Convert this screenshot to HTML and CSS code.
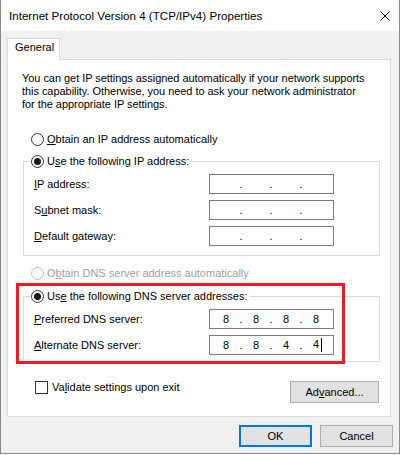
FILE: index.html
```html
<!DOCTYPE html>
<html lang="en">
<head>
  <meta charset="UTF-8" />
  <meta name="viewport" content="width=device-width, initial-scale=1.0" />
  <title>Internet Protocol Version 4 (TCP/IPv4) Properties</title>
  <link rel="stylesheet" href="styles.css">
</head>
<body>
  <div class="window">
    <div class="titlebar">
      <span class="title">Internet Protocol Version 4 (TCP/IPv4) Properties</span>
      <svg class="close" width="10" height="10" viewBox="0 0 10 10">
        <path d="M0.5 0.5 L9.5 9.5 M9.5 0.5 L0.5 9.5" stroke="#000" stroke-width="1" fill="none" />
      </svg>
    </div>

    <div class="content">
      <div class="tab">General</div>
      <div class="panel">
        <p class="intro">You can get IP settings assigned automatically if your network supports<br>this capability. Otherwise, you need to ask your network administrator<br>for the appropriate IP settings.</p>

        <div class="option first"><span class="radio"></span><span><u>O</u>btain an IP address automatically</span></div>

        <fieldset class="group ip-group">
          <legend class="option"><span class="radio checked"></span><span>U<u>s</u>e the following IP address:</span></legend>
          <div class="rows">
            <span class="field-label"><u>I</u>P address:</span>
            <span class="ip-box"><span class="octet"></span><span class="dot">.</span><span class="octet"></span><span class="dot">.</span><span class="octet"></span><span class="dot">.</span><span class="octet"></span></span>

            <span class="field-label">S<u>u</u>bnet mask:</span>
            <span class="ip-box"><span class="octet"></span><span class="dot">.</span><span class="octet"></span><span class="dot">.</span><span class="octet"></span><span class="dot">.</span><span class="octet"></span></span>

            <span class="field-label"><u>D</u>efault gateway:</span>
            <span class="ip-box"><span class="octet"></span><span class="dot">.</span><span class="octet"></span><span class="dot">.</span><span class="octet"></span><span class="dot">.</span><span class="octet"></span></span>
          </div>
        </fieldset>

        <div class="option disabled"><span class="radio"></span><span>O<u>b</u>tain DNS server address automatically</span></div>

        <fieldset class="group dns-group">
          <legend class="option"><span class="radio checked"></span><span>Us<u>e</u> the following DNS server addresses:</span></legend>
          <div class="rows">
            <span class="field-label"><u>P</u>referred DNS server:</span>
            <span class="ip-box"><span class="octet">8</span><span class="dot">.</span><span class="octet">8</span><span class="dot">.</span><span class="octet">8</span><span class="dot">.</span><span class="octet">8</span></span>

            <span class="field-label"><u>A</u>lternate DNS server:</span>
            <span class="ip-box"><span class="octet">8</span><span class="dot">.</span><span class="octet">8</span><span class="dot">.</span><span class="octet">4</span><span class="dot">.</span><span class="octet">4<span class="caret"></span></span></span>
          </div>
        </fieldset>

        <div class="panel-footer">
          <div class="check"><span class="checkbox"></span><span>Va<u>l</u>idate settings upon exit</span></div>
          <button class="button advanced">Ad<u>v</u>anced...</button>
        </div>
      </div>
    </div>

    <div class="actions">
      <button class="button default">OK</button>
      <button class="button">Cancel</button>
    </div>

    <div class="highlight"></div>
  </div>
</body>
</html>
```

FILE: styles.css
```css
* {
  box-sizing: border-box;
  margin: 0;
  padding: 0;
}

html {
  background: #fff;
}

body {
  font-family: "Liberation Sans", Arial, sans-serif;
  font-size: 11px;
  color: #000;
}

.window {
  position: relative;
  width: 400px;
  height: 454px;
  background: #f0f0f0;
  border: 1px solid #888;
  border-top: none;
}

.titlebar {
  height: 31px;
  background: #fff;
  display: flex;
  align-items: center;
  justify-content: space-between;
  padding: 0 9px 0 8px;
}

.title {
  font-size: 11.6px;
}

.close {
  display: block;
}

.content {
  padding: 7px 8px 0 6px;
}

.tab {
  position: relative;
  z-index: 1;
  width: 53px;
  height: 22px;
  margin-bottom: -1px;
  padding: 2px 0 0 7px;
  line-height: 13px;
  background: #fff;
  border: 1px solid #d9d9d9;
  border-bottom-color: #fff;
}

.panel {
  background: #fff;
  border: 1px solid #d9d9d9;
  padding: 12px 10px 13px 15px;
}

.intro {
  line-height: 13px;
  margin-left: -1px;
  letter-spacing: -0.05px;
}

.option {
  display: flex;
  align-items: center;
  gap: 3px;
  height: 13px;
  line-height: 13px;
}

.option.first {
  margin: 22px 0 0 8px;
}

.option.disabled {
  margin: 11px 0 0 8px;
  color: #a0a0a0;
}

.radio {
  flex: none;
  width: 13px;
  height: 13px;
  border: 1px solid #333;
  border-radius: 50%;
  background: #fff;
  display: flex;
  align-items: center;
  justify-content: center;
}

.radio.checked::after {
  content: "";
  width: 7px;
  height: 7px;
  border-radius: 50%;
  background: #1a1a1a;
}

.disabled .radio {
  border-color: #bcbcbc;
}

.group {
  border: 1px solid #dcdcdc;
  padding: 0 0 9px 0;
  min-width: 0;
}

.group legend {
  margin-left: 7px;
  padding: 0 2px 0 0;
}

.ip-group {
  margin-top: 9px;
}

.dns-group {
  margin-top: 10px;
  padding-bottom: 6px;
}

.rows {
  display: grid;
  grid-template-columns: 175px 125px;
  row-gap: 6px;
  align-items: center;
  margin-top: 6px;
  padding-left: 10px;
}

.field-label {
  line-height: 13px;
}

.ip-box {
  display: flex;
  align-items: center;
  height: 20px;
  padding-left: 4px;
  border: 1px solid #7a7a7a;
  background: #fff;
}

.octet {
  width: 24px;
  text-align: center;
}

.dot {
  width: 6px;
  text-align: center;
}

.caret {
  display: inline-block;
  width: 1px;
  height: 14px;
  margin: 0 -3px 0 2px;
  background: #000;
  vertical-align: middle;
}

.panel-footer {
  display: flex;
  justify-content: space-between;
  align-items: flex-start;
  margin-top: 19px;
}

.check {
  display: flex;
  align-items: center;
  gap: 4px;
  height: 13px;
  line-height: 13px;
  margin-left: 12px;
}

.checkbox {
  width: 13px;
  height: 13px;
  border: 1px solid #333;
  background: #fff;
}

.button {
  height: 22px;
  font: inherit;
  color: #000;
  background: #e1e1e1;
  border: 1px solid #adadad;
  text-align: center;
}

.advanced {
  width: 89px;
  margin-right: 1px;
}

.actions {
  display: flex;
  justify-content: flex-end;
  gap: 8px;
  padding: 8px 6px 0 0;
}

.actions .button {
  width: 73px;
}

.button.default {
  border: 2px solid #0078d7;
}

.highlight {
  position: absolute;
  left: 15px;
  top: 283px;
  width: 329px;
  height: 81px;
  border: 3px solid #ed1c24;
  pointer-events: none;
}
```
